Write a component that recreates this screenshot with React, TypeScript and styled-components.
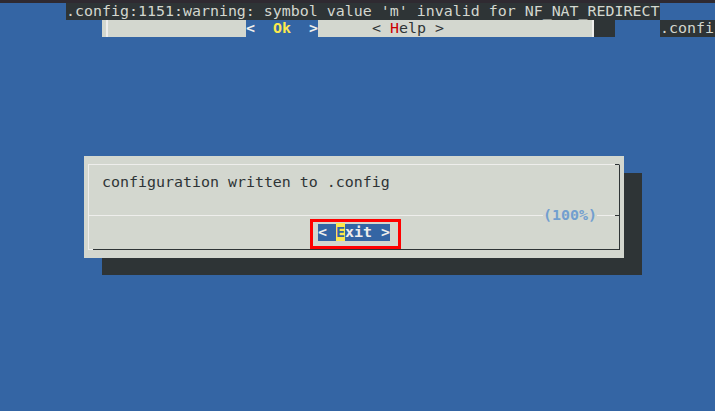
import styled, { createGlobalStyle } from "styled-components"

const CELL_W = 9
const ROW_H = 17

const BLUE = "#3465a4"
const DARK = "#2e3436"
const GRAY = "#d3d7cf"
const WHITE = "#eeeeec"
const YELLOW = "#fce94f"

const GlobalStyle = createGlobalStyle`
	html,
	body {
		margin: 0;
		padding: 0;
		background: ${BLUE};
	}
	body {
		width: 715px;
		height: 411px;
		overflow: hidden;
	}
`

export default function App() {
	return (
		<>
			<GlobalStyle />
			<Terminal>
				<TitleEdge />
				<Screen>
					<Row>
						<Cell $cols={7} />
						<Cell $cols={66} $bg={DARK} $fg={GRAY}>
							.config:1151:warning: symbol value 'm' invalid for NF_NAT_REDIRECT
						</Cell>
					</Row>

					<Row>
						<Cell $cols={11} />
						<Cell $px={144} $bg={GRAY} $rule={4} />
						<Cell $cols={8} $bg={BLUE} $bold>
							{"<  "}
							<Glyph $fg={YELLOW}>Ok</Glyph>
							{"  >"}
						</Cell>
						<Cell $px={274} $bg={GRAY} $fg={DARK}>
							{"      < "}
							<Glyph $fg="#cc0000">H</Glyph>
							{"elp >"}
						</Cell>
						<Cell $px={2} $bg={WHITE} />
						<Cell $px={21} $bg={DARK} />
						<Cell $px={45} />
						<Cell $px={55} $bg={DARK} $fg={GRAY}>
							.confi
						</Cell>
					</Row>

					<Dialog>
						<Frame>
							<Message>configuration written to .config</Message>
							<Separator>
								<SepLine $px={454} />
								<Percent>(100%)</Percent>
								<SepLine $px={18} />
								<SepLine $px={4} $dark />
							</Separator>
							<ButtonBar>
								<ExitButton>
									{"< "}
									<Glyph $fg={BLUE} $bg={YELLOW}>
										E
									</Glyph>
									{"xit >"}
									<Highlight />
								</ExitButton>
							</ButtonBar>
						</Frame>
					</Dialog>
				</Screen>
			</Terminal>
		</>
	)
}

const Terminal = styled.div`
	width: 715px;
	height: 411px;
	overflow: hidden;
	background: ${BLUE};
	display: flex;
	flex-direction: column;
	font-family: "DejaVu Sans Mono", "Liberation Mono", monospace;
	font-size: 14.95px;
	line-height: ${ROW_H}px;
`

const TitleEdge = styled.div`
	flex: none;
	height: 3px;
	background: #2f2a31;
`

const Screen = styled.div`
	display: flex;
	flex-direction: column;
	padding-left: 3px;
`

const Row = styled.div`
	display: flex;
	height: ${ROW_H}px;
`

type CellProps = {
	$cols?: number
	$px?: number
	$bg?: string
	$fg?: string
	$bold?: boolean
	$rule?: number
}

const Cell = styled.span<CellProps>`
	flex: none;
	width: ${(p) => p.$px ?? (p.$cols ?? 1) * CELL_W}px;
	height: ${ROW_H}px;
	color: ${(p) => p.$fg ?? WHITE};
	font-weight: ${(p) => (p.$bold ? 700 : 400)};
	white-space: pre;
	overflow: hidden;
	background: ${(p) =>
		p.$rule !== undefined
			? `linear-gradient(to right, ${p.$bg} ${p.$rule}px, ${WHITE} ${p.$rule}px, ${WHITE} ${
					p.$rule + 2
			  }px, ${p.$bg} ${p.$rule + 2}px)`
			: p.$bg ?? "transparent"};
`

const Glyph = styled.span<{ $fg?: string; $bg?: string }>`
	color: ${(p) => p.$fg ?? "inherit"};
	background: ${(p) => p.$bg ?? "transparent"};
`

const Dialog = styled.div`
	box-sizing: border-box;
	width: 540px;
	height: 102px;
	margin: 119px 0 0 81px;
	padding: 8px 4px 0;
	background: ${GRAY};
	box-shadow: 18px 17px 0 ${DARK};
`

const Frame = styled.div`
	position: relative;
	box-sizing: border-box;
	height: 86px;
	display: flex;
	flex-direction: column;
	border-top: 1px solid ${WHITE};
	border-left: 1px solid ${WHITE};
	border-right: 1px solid ${DARK};
	border-bottom: 1px solid ${DARK};

	&::before {
		content: "";
		position: absolute;
		top: -1px;
		right: 0;
		width: 4px;
		height: 1px;
		background: ${DARK};
	}
	&::after {
		content: "";
		position: absolute;
		left: -1px;
		bottom: -1px;
		width: 5px;
		height: 1px;
		background: ${WHITE};
	}
`

const Message = styled.div`
	height: 42px;
	box-sizing: border-box;
	padding: 9px 0 0 13px;
	color: ${DARK};
	white-space: pre;
`

const Separator = styled.div`
	display: flex;
	height: ${ROW_H}px;
`

const SepLine = styled.span<{ $px: number; $dark?: boolean }>`
	flex: none;
	width: ${(p) => p.$px}px;
	height: 1px;
	margin-top: 8px;
	background: ${(p) => (p.$dark ? DARK : WHITE)};
`

const Percent = styled.span`
	flex: none;
	width: ${6 * CELL_W}px;
	color: #729fcf;
	font-weight: 700;
	white-space: pre;
`

const ButtonBar = styled.div`
	display: flex;
	justify-content: center;
	height: ${ROW_H}px;
`

const ExitButton = styled.span`
	position: relative;
	width: ${8 * CELL_W}px;
	height: ${ROW_H}px;
	background: ${BLUE};
	color: ${WHITE};
	font-weight: 700;
	white-space: pre;
`

const Highlight = styled.span`
	position: absolute;
	left: -8px;
	top: -5px;
	width: 91px;
	height: 30px;
	box-sizing: border-box;
	border: 3px solid #ff0000;
`
